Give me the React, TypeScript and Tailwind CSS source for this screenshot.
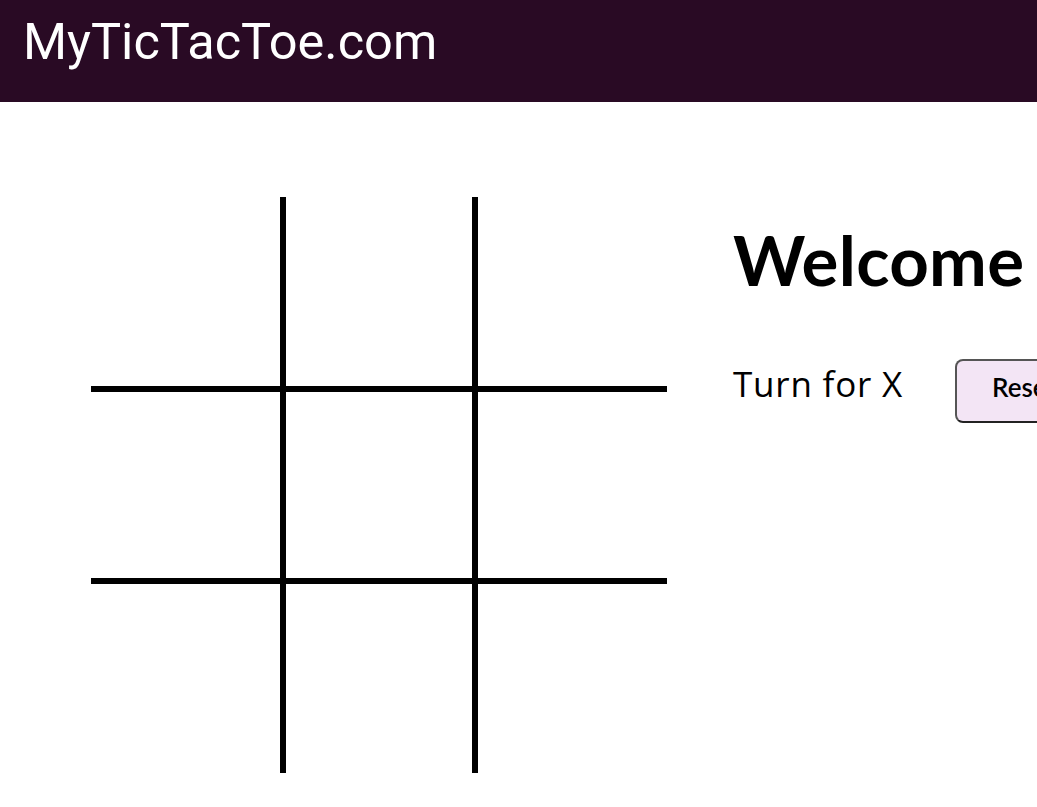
import React from "react";

const cellClasses = [
  "border-r-[3px] border-b-[3px]",
  "border-x-[3px] border-b-[3px]",
  "border-l-[3px] border-b-[3px]",
  "border-r-[3px] border-y-[3px]",
  "border-[3px]",
  "border-l-[3px] border-y-[3px]",
  "border-r-[3px] border-t-[3px]",
  "border-x-[3px] border-t-[3px]",
  "border-l-[3px] border-t-[3px]",
];

export default function App() {
  return (
    <div className="w-[1037px] h-[807px] overflow-hidden bg-white">
      <header className="h-[102px] bg-[#290a24] pl-[23px] pt-[17px]">
        <h1
          className="text-white text-[50.5px] leading-none"
          style={{ fontFamily: "Roboto, sans-serif" }}
        >
          MyTicTacToe.com
        </h1>
      </header>
      <main className="flex pl-[91px] pt-[95px]">
        <div className="grid grid-cols-3 w-[576px] h-[576px] shrink-0">
          {cellClasses.map((c, i) => (
            <button
              key={i}
              className={`w-[192px] h-[192px] border-black bg-white ${c}`}
            />
          ))}
        </div>
        <section className="ml-[66px] pt-[28px] shrink-0 whitespace-nowrap">
          <h2
            className="text-[69px] leading-none font-bold text-black tracking-[0.3px]"
            style={{ fontFamily: "Lato, sans-serif" }}
          >
            Welcome
          </h2>
          <div className="flex items-start mt-[65px]">
            <p
              className="mt-[7px] text-[35px] leading-none font-normal text-black tracking-[0.8px]"
              style={{ fontFamily: "'Open Sans', sans-serif" }}
            >
              Turn for X
            </p>
            <button
              className="ml-[52px] h-[64px] pl-[35px] pr-[35px] pb-[8px] rounded-[8px] border-2 border-[#555555] border-b-[#222222] bg-[#f3e5f5] text-[26px] font-semibold text-black leading-none"
              style={{ fontFamily: "Lato, sans-serif" }}
            >
              Reset Game
            </button>
          </div>
        </section>
      </main>
    </div>
  );
}
